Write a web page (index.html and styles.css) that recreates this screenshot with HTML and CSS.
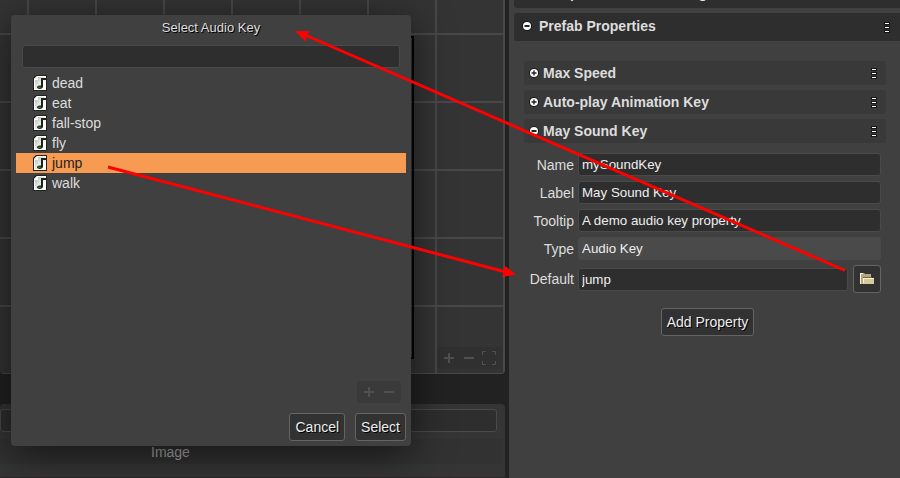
FILE: index.html
```html
<!DOCTYPE html>
<html lang="en">
<head>
<meta charset="utf-8">
<title>Scene Editor</title>
<link rel="stylesheet" href="styles.css">
</head>
<body>
<svg class="defs" aria-hidden="true">
  <linearGradient id="paper" x1="0" y1="0" x2="1" y2="1">
    <stop offset="0" stop-color="#b4b4b4"/><stop offset=".7" stop-color="#fff"/>
  </linearGradient>
  <symbol id="audio" viewBox="0 0 14 16">
    <path d="M3 0h11v16H0V3z" fill="#222"/>
    <path d="M4 1h9v14H1V4z" fill="#fff"/>
    <path d="M5 2h7v12H2V5h3z" fill="url(#paper)"/>
    <path d="M1 4l3-3v3z" fill="#f4f4f4"/>
    <path d="M8 3h5v2H10v6.500c0 1.500-1.500 2.500-3.200 2.500S4 13.200 4 12.300c0-1.300 2-2 4-1.800z" fill="#16280f"/>
    <ellipse cx="6.500" cy="12.200" rx="1.500" ry=".8" fill="#4c7442"/>
  </symbol>
  <symbol id="open" viewBox="0 0 10 10">
    <circle cx="5" cy="5" r="4.800" fill="#111"/><circle cx="5" cy="5" r="4" fill="#fff"/><path d="M2.500 4h5v2h-5z" fill="#222"/>
  </symbol>
  <symbol id="closed" viewBox="0 0 10 10">
    <circle cx="5" cy="5" r="4.800" fill="#111"/><circle cx="5" cy="5" r="4" fill="#fff"/><path d="M2.500 4.300h5v1.400h-5zM4.300 2.500h1.400v5H4.300z" fill="#222"/>
  </symbol>
  <symbol id="menu" viewBox="0 0 6 11">
    <path d="M0 0h6v3H0zM0 4h6v3H0zM0 8h6v3H0z" fill="#161616"/>
    <path d="M1 1h4v1H1zM1 5h4v1H1zM1 9h4v1H1z" fill="#fff"/>
  </symbol>
  <symbol id="plus" viewBox="0 0 14 14"><path d="M6 2h2v4h4v2H8v4H6V8H2V6h4z"/></symbol>
  <symbol id="minus" viewBox="0 0 14 14"><path d="M2 6h10v2H2z"/></symbol>
  <symbol id="fit" viewBox="0 0 14 14"><path d="M.5 4V.5H4M10 .5h3.500V4M13.500 10v3.500H10M4 13.500H.5V10" fill="none" stroke="currentColor"/></symbol>
</svg>

<div class="app">
  <main class="workspace">
    <section class="canvas" aria-label="Scene">
      <div class="scene-border"></div>
      <div class="tools">
        <button aria-label="Zoom in"><svg width="14" height="14"><use href="#plus"/></svg></button>
        <button aria-label="Zoom out"><svg width="14" height="14"><use href="#minus"/></svg></button>
        <button aria-label="Fit"><svg width="14" height="14"><use href="#fit"/></svg></button>
      </div>
    </section>
    <section class="blocks" aria-label="Blocks">
      <div class="filter"><input type="text" class="field" aria-label="Filter blocks"></div>
      <h2 class="group">Image</h2>
      <div class="thumbs"></div>
    </section>
  </main>

  <aside class="inspector">
    <h2 class="section clipped"><span>Compiler General Settings</span></h2>
    <h2 class="section">
      <svg width="10" height="10"><use href="#open"/></svg><span>Prefab Properties</span>
      <button class="kebab" aria-label="Section menu"><svg width="6" height="11"><use href="#menu"/></svg></button>
    </h2>
    <div class="properties">
      <h3 class="property"><svg width="10" height="10"><use href="#closed"/></svg><span>Max Speed</span>
        <button class="kebab" aria-label="Max Speed menu"><svg width="6" height="11"><use href="#menu"/></svg></button></h3>
      <h3 class="property"><svg width="10" height="10"><use href="#closed"/></svg><span>Auto-play Animation Key</span>
        <button class="kebab" aria-label="Animation menu"><svg width="6" height="11"><use href="#menu"/></svg></button></h3>
      <h3 class="property"><svg width="10" height="10"><use href="#open"/></svg><span>May Sound Key</span>
        <button class="kebab" aria-label="Sound menu"><svg width="6" height="11"><use href="#menu"/></svg></button></h3>
      <form class="form">
        <label for="name">Name</label><input class="field" type="text" id="name" value="mySoundKey">
        <label for="label">Label</label><input class="field" type="text" id="label" value="May Sound Key">
        <label for="tooltip">Tooltip</label><input class="field" type="text" id="tooltip" value="A demo audio key property">
        <label for="type">Type</label><input class="field readonly" type="text" id="type" value="Audio Key" readonly>
        <label for="default">Default</label>
        <div class="picker">
          <input class="field" type="text" id="default" value="jump">
          <button type="button" class="button browse" aria-label="Browse">
            <svg width="16" height="14" viewBox="0 0 16 14">
              <path d="M1 1h4l1 1h6v4H5v6H1z" fill="#b5a77e"/>
              <path d="M1 1h3v1H2v10H1z" fill="#fff8dc"/>
              <path d="M4 5h9v1H4z" fill="#746945"/>
              <path d="M4 6h11v6H3l1-1z" fill="#d8c99d"/>
              <path d="M4 6h11v1H5v4H4z" fill="#fff3cb"/>
            </svg>
          </button>
        </div>
      </form>
      <button class="button add">Add Property</button>
    </div>
  </aside>
</div>

<div class="dialog" role="dialog" aria-labelledby="dialog-title">
  <h1 id="dialog-title">Select Audio Key</h1>
  <input type="text" class="field search" aria-label="Filter keys">
  <ul class="list" role="listbox" aria-label="Audio keys">
    <li role="option"><svg width="14" height="16"><use href="#audio"/></svg>dead</li>
    <li role="option"><svg width="14" height="16"><use href="#audio"/></svg>eat</li>
    <li role="option"><svg width="14" height="16"><use href="#audio"/></svg>fall-stop</li>
    <li role="option"><svg width="14" height="16"><use href="#audio"/></svg>fly</li>
    <li role="option" aria-selected="true"><svg width="14" height="16"><use href="#audio"/></svg>jump</li>
    <li role="option"><svg width="14" height="16"><use href="#audio"/></svg>walk</li>
  </ul>
  <div class="tools dialog-tools">
    <button aria-label="Zoom in"><svg width="14" height="14"><use href="#plus"/></svg></button>
    <button aria-label="Zoom out"><svg width="14" height="14"><use href="#minus"/></svg></button>
  </div>
  <div class="actions">
    <button class="button">Cancel</button>
    <button class="button">Select</button>
  </div>
</div>

<svg class="arrows" width="900" height="478" viewBox="0 0 900 478" aria-hidden="true">
  <path d="M845 270.500L305 35M108 167L506 272" fill="none" stroke="red" stroke-width="3"/>
  <path d="M295 31l15.500.3-3.800 3.700-.9 6.800zM516 274.500l-14.500 2.700 3.200-5.200-.7-6.800z" fill="red"/>
</svg>
</body>
</html>
```
FILE: styles.css
```css
* { box-sizing: border-box; }

body {
  margin: 0;
  overflow: hidden;
  background: #222;
  color: #ddd;
  font: 14px/20px "Liberation Sans", Arial, sans-serif;
}

h1, h2, h3, ul { margin: 0; padding: 0; }
svg { display: block; flex: none; }
button { font: inherit; color: inherit; }
.defs { position: absolute; width: 0; height: 0; }

.app {
  display: grid;
  grid-template-columns: minmax(0, 1fr) 391px;
  column-gap: 4px;
  height: 100vh;
}

.workspace {
  display: grid;
  grid-template-rows: minmax(0, 1fr) 74px;
  row-gap: 30px;
  min-width: 0;
}

.canvas {
  position: relative;
  border-radius: 0 0 4px 4px;
  background-color: #343434;
  background-image:
    linear-gradient(#484848 2px, transparent 2px),
    linear-gradient(90deg, #484848 2px, transparent 2px);
  background-size: 68px 68px;
  background-position: 27px 33px;
}

.scene-border {
  position: absolute;
  inset: 36px 91px 15px 60px;
  border: 2px solid #000;
}

.tools {
  display: flex;
  align-items: center;
  gap: 6px;
  height: 22px;
  padding: 0 5px;
  border-radius: 3px;
  background: #303030;
  color: #505050;
  fill: #505050;
}

.canvas .tools {
  position: absolute;
  right: 4px;
  bottom: 5px;
}

.tools button {
  padding: 0;
  border: 0;
  background: none;
}

.blocks {
  display: flex;
  flex-direction: column;
  border-radius: 4px 4px 0 0;
  background: #353535;
}

.filter {
  display: flex;
  padding: 5px 8px 7px 0;
}

.group {
  height: 25px;
  margin-right: 3px;
  padding-left: 151px;
  background: #323232;
  color: #aaa;
  font-size: 14px;
  font-weight: normal;
  line-height: 26px;
}

.thumbs {
  height: 1px;
  margin-top: auto;
  background: #2b2525;
}

.field {
  width: 100%;
  height: 23px;
  min-width: 0;
  padding: 0 3px;
  border: 1px solid #4a4a4a;
  border-radius: 3px;
  outline: 0;
  background: #2e2e2e;
  color: #eee;
  font-family: "Liberation Sans", Arial, sans-serif;
}

.readonly { background: #4a4a4a; }

.button {
  height: 28px;
  padding: 0 5px;
  border: 1px solid #646464;
  border-radius: 3px;
  background: #323232;
  color: #eee;
  text-shadow: 1px 1px #000;
}

.inspector {
  padding-left: 5px;
  overflow: hidden;
  background: #404040;
}

.section, .property {
  display: flex;
  align-items: center;
  color: #ddd;
  font-weight: bold;
}

.section {
  height: 28px;
  padding: 0 10px 2px 8px;
  border-radius: 3px 0 0 3px;
  background: #2e2e2e;
  font-size: 14px;
}

.section span { margin-left: 7px; }

.clipped {
  margin: -20px 0 5px;
  padding-left: 18px;
}

.kebab {
  margin-left: auto;
  padding: 0;
  border: 0;
  background: none;
}

.section .kebab { padding-top: 2px; }

.properties {
  display: flex;
  flex-direction: column;
  gap: 5px;
  padding: 20px 14px 0 10px;
}

.property {
  height: 24px;
  padding: 0 9px 0 5px;
  border-radius: 3px;
  background: #393939;
  font-size: 14px;
}

.property span { margin-left: 4px; }

.form {
  display: grid;
  grid-template-columns: 50px minmax(0, 1fr);
  align-items: center;
  gap: 5px 4px;
  margin: 5px 5px 0 0;
}

.form label { text-align: right; }

.picker {
  display: flex;
  align-items: center;
  gap: 5px;
}

.browse {
  flex: none;
  width: 28px;
}

.add {
  align-self: center;
  margin: 10px 5px 0 10px;
}

.dialog {
  position: absolute;
  top: 15px;
  left: 11px;
  display: flex;
  flex-direction: column;
  width: 400px;
  height: 431px;
  padding: 3px 5px 5px;
  border-radius: 4px;
  background: #404040;
  box-shadow: 0 8px 40px rgba(0, 0, 0, .6);
}

.dialog h1 {
  font-size: 13px;
  font-weight: normal;
  text-align: center;
  text-shadow: 1px 1px #000;
}

.search {
  align-self: center;
  width: 378px;
  margin: 7px 0 5px;
}

.list {
  flex: 1;
  list-style: none;
}

.list li {
  display: flex;
  align-items: center;
  gap: 5px;
  height: 20px;
  padding-left: 17px;
}

.list [aria-selected] {
  background: #f79b52;
  color: #222;
}

.dialog-tools {
  align-self: flex-end;
  margin: 0 5px 10px;
  background: #3a3a3a;
}

.actions {
  display: flex;
  justify-content: flex-end;
  gap: 10px;
}

.arrows {
  position: absolute;
  top: 0;
  left: 0;
  pointer-events: none;
}
```
